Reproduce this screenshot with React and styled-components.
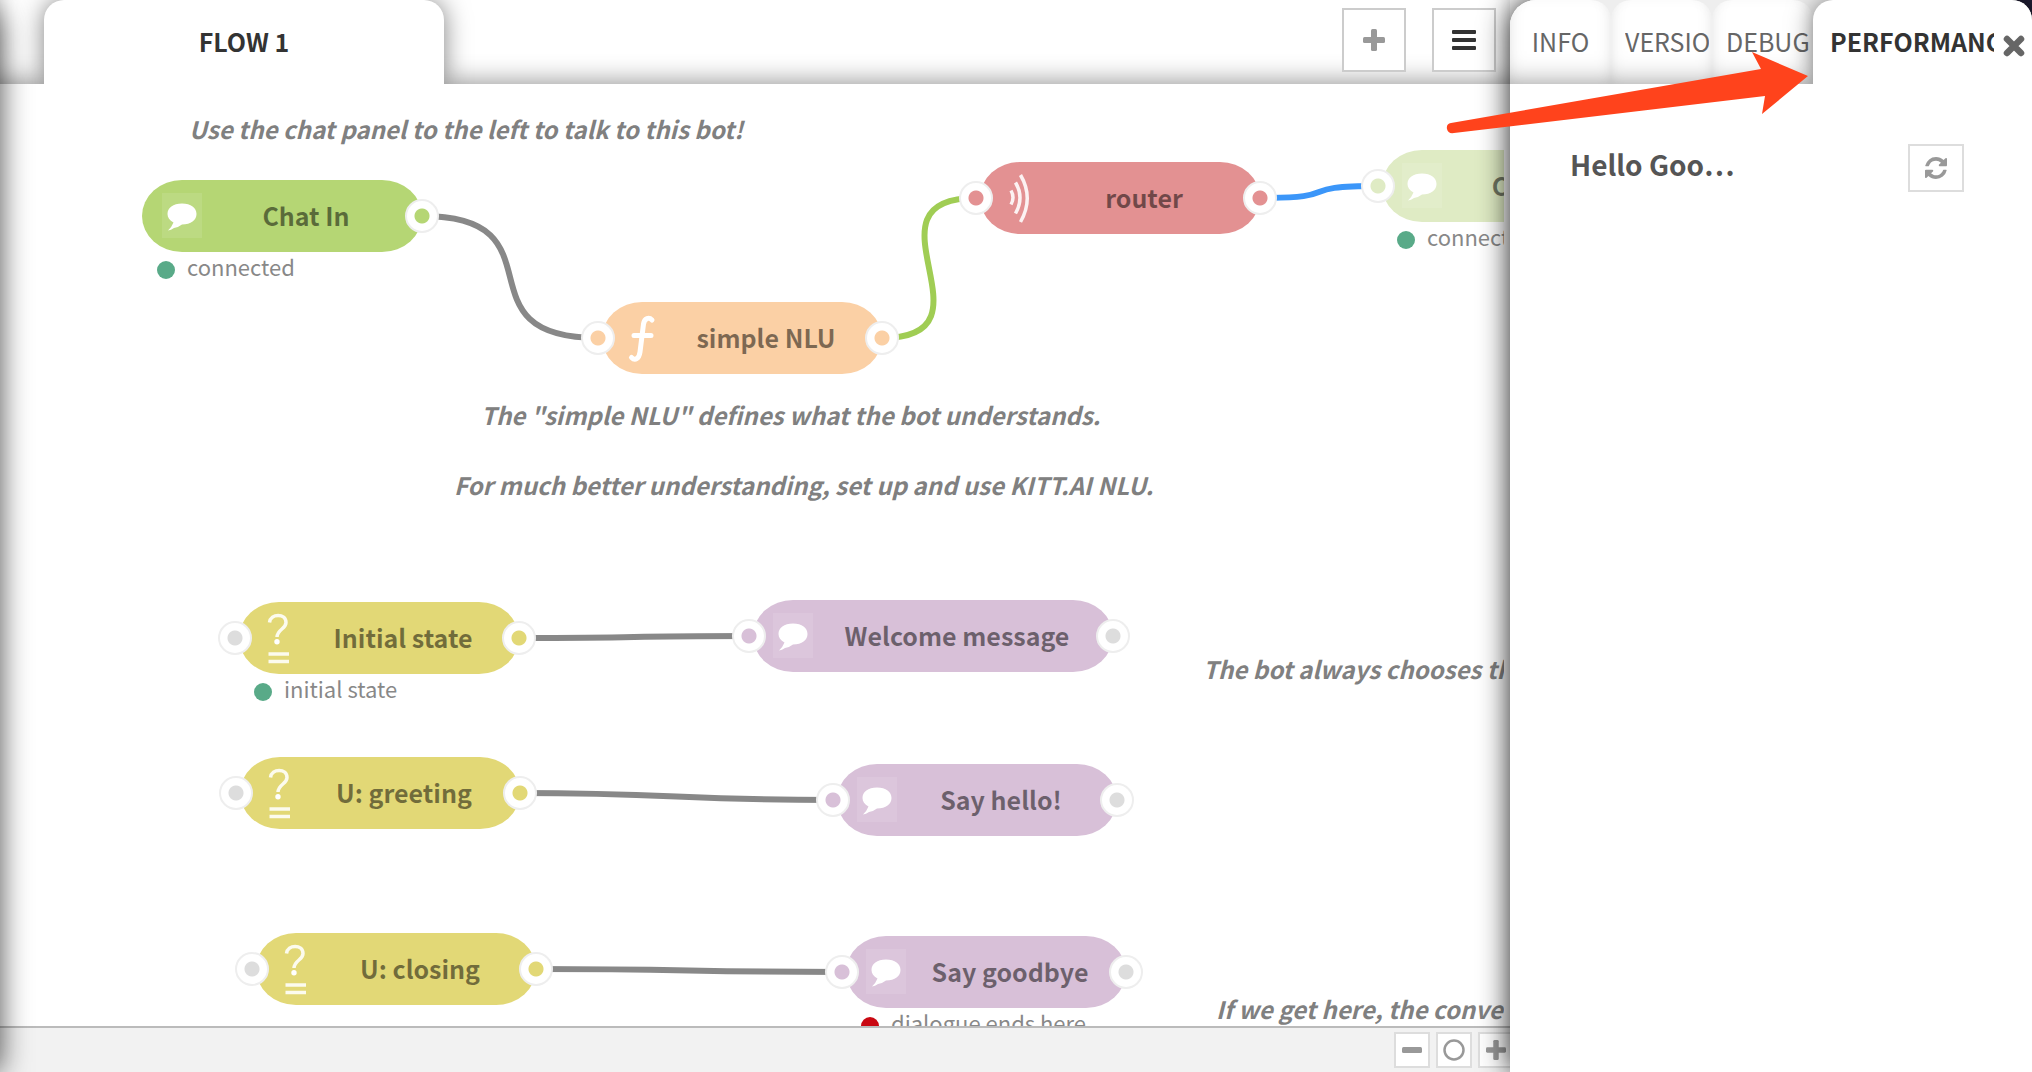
import React from 'react';
import styled, { createGlobalStyle } from 'styled-components';

const GlobalStyle = createGlobalStyle`
  *, *::before, *::after { box-sizing: border-box; }
  body {
    margin: 0;
    overflow: hidden;
    background: #fff;
    font-family: 'Noto Sans CJK SC', 'Open Sans', sans-serif;
    font-size: 25px;
    line-height: 36px;
    color: #333;
  }
  button { font: inherit; color: inherit; margin: 0; padding: 0; cursor: pointer; }
  p, h2 { margin: 0; }
`;

const Shell = styled.div`
  position: relative;
  display: flex;
  height: 100vh;
  overflow: hidden;
  background: linear-gradient(to left, #23213a 60px, #fff 60px);
`;

const Workspace = styled.main`
  flex: 1;
  min-width: 0;
  display: flex;
  flex-direction: column;
  background: #fff;
`;

const ChatDrawerEdge = styled.div`
  position: absolute;
  z-index: 2;
  top: 0;
  bottom: 0;
  left: -60px;
  width: 60px;
  border-radius: 30px 30px 0 0;
  box-shadow: 0 0 30px rgba(0, 0, 0, 0.7);
  pointer-events: none;
`;

const Header = styled.header`
  display: flex;
  align-items: flex-start;
  flex: none;
  height: 84px;
  padding: 0 14px 0 44px;
  overflow: hidden;
  box-shadow: inset 0 -16px 26px -14px rgba(0, 0, 0, 0.42);
`;

const FlowTab = styled.button`
  width: 400px;
  height: 84px;
  padding-bottom: 2px;
  border: 0;
  border-radius: 20px 20px 0 0;
  background: #fff;
  font-weight: 700;
  box-shadow: 0 0 26px rgba(0, 0, 0, 0.5);
`;

const HeaderActions = styled.div`
  display: flex;
  gap: 26px;
  margin: 8px 0 0 auto;
`;

const IconButton = styled.button`
  display: flex;
  align-items: center;
  justify-content: center;
  flex: none;
  width: ${(p) => p.$w}px;
  height: ${(p) => p.$h}px;
  border: 2px solid ${(p) => p.$line || '#ddd'};
  background: #fff;
`;

const Canvas = styled.section`
  position: relative;
  flex: 1;
  min-height: 0;
  margin-right: 6px;
  overflow: hidden;
`;

const Wires = styled.svg`
  position: absolute;
  top: 0;
  left: 0;
  width: 100%;
  height: 100%;
  fill: none;
  stroke-width: 6px;
`;

const Note = styled.p`
  position: absolute;
  left: ${(p) => p.$x}px;
  top: ${(p) => p.$y}px;
  font-size: 24px;
  font-weight: 700;
  font-style: italic;
  color: #808080;
  white-space: nowrap;
`;

const NodeBox = styled.div`
  position: absolute;
  left: ${(p) => p.$x}px;
  top: ${(p) => p.$y}px;
  width: ${(p) => p.$w}px;
  height: 72px;
  display: flex;
  align-items: center;
  justify-content: center;
  padding: 0 0 2px 48px;
  border-radius: 40px / 36px;
  background: ${(p) => p.$color};
  font-weight: 700;
  white-space: nowrap;
`;

const NodeName = styled.span`
  color: rgba(0, 0, 0, 0.5);
`;

const NodeIcon = styled.svg`
  position: absolute;
  left: 20px;
  top: 0;
  width: 40px;
  height: 72px;
  fill: none;
  stroke: #fff;
  stroke-opacity: 0.88;
  stroke-width: 4px;
`;

const Port = styled.span`
  position: absolute;
  top: 19px;
  ${(p) => (p.$side === 'in' ? 'left: -21px;' : 'right: -17px;')}
  width: 34px;
  height: 34px;
  border: 2px solid #eee;
  border-radius: 50%;
  background: radial-gradient(circle, ${(p) => p.$dot} 0 7px, #fff 8px);
`;

const Status = styled.div`
  position: absolute;
  left: 15px;
  top: 72px;
  display: flex;
  align-items: center;
  gap: 12px;
  font-size: 22px;
  line-height: 28px;
  font-weight: 400;
  color: #888;

  &::before {
    content: '';
    width: 18px;
    height: 18px;
    margin-top: 8px;
    border-radius: 50%;
    background: ${(p) => p.$color};
  }
`;

const Footer = styled.footer`
  display: flex;
  align-items: center;
  justify-content: flex-end;
  flex: none;
  gap: 6px;
  height: 46px;
  border-top: 2px solid #bbb;
  background: #f2f2f2;
  margin-right: -4px;
`;

const SidePanel = styled.aside`
  position: relative;
  z-index: 1;
  flex: none;
  display: flex;
  flex-direction: column;
  width: 522px;
  border-radius: 26px 20px 0 0;
  background: #fff;
  box-shadow: 0 0 30px rgba(0, 0, 0, 0.9);
`;

const PanelTabs = styled.div`
  display: flex;
  height: 84px;
  overflow: hidden;
  border-radius: 26px 20px 0 0;
  background: #eee;
`;

const PanelTab = styled.button`
  position: relative;
  z-index: ${(p) => (p.$active ? 1 : 0)};
  flex: ${(p) => (p.$active ? '1' : 'none')};
  min-width: 0;
  width: ${(p) => (p.$active ? 'auto' : '101px')};
  height: 84px;
  padding: ${(p) => (p.$active ? '0 38px 2px 17px' : p.$center ? '0 0 2px' : '0 3px 2px 14px')};
  border: 0;
  border-radius: 20px 20px 0 0;
  background: #fff;
  color: ${(p) => (p.$active ? '#333' : '#666')};
  font-weight: ${(p) => (p.$active ? 700 : 400)};
  text-align: ${(p) => (p.$center ? 'center' : 'left')};
  box-shadow: ${(p) =>
    p.$active
      ? '0 0 26px rgba(0, 0, 0, 0.5)'
      : 'inset 0 -16px 26px -14px rgba(0, 0, 0, 0.36), inset 0 0 12px rgba(0, 0, 0, 0.03)'};

  span {
    display: block;
    overflow: hidden;
    white-space: nowrap;
  }
`;

const CloseButton = styled.button`
  position: absolute;
  z-index: 2;
  top: 34px;
  right: 6px;
  display: flex;
  border: 0;
  background: none;
`;

const PanelBody = styled.div`
  display: flex;
  align-items: flex-start;
  justify-content: space-between;
  padding: 60px 68px 0 60px;
`;

const PanelTitle = styled.h2`
  font-size: 28px;
  line-height: 40px;
  font-weight: 700;
  color: #555;
`;

const Pointer = styled.svg`
  position: absolute;
  z-index: 3;
  top: 52px;
  right: 222px;
  width: 366px;
  height: 84px;
  pointer-events: none;
`;

const PlusIcon = ({ size = 22, color = '#999' }) => (
  <svg width={size} height={size} viewBox="0 0 22 22" fill={color} aria-hidden="true">
    <rect x="8" y="0" width="6" height="22" rx="1.5" />
    <rect x="0" y="8" width="22" height="6" rx="1.5" />
  </svg>
);

const MenuIcon = () => (
  <svg width="24" height="20" viewBox="0 0 24 20" fill="#333" aria-hidden="true">
    <rect width="24" height="4" rx="1" />
    <rect y="8" width="24" height="4" rx="1" />
    <rect y="16" width="24" height="4" rx="1" />
  </svg>
);

const RefreshIcon = () => (
  <svg width="22" height="22" viewBox="0 0 1536 1536" fill="#999" aria-hidden="true">
    <path d="M1511 928q0 5-1 7-64 268-268 434.500T764 1536q-146 0-282.500-55T238 1324l-129 129q-19 19-45 19t-45-19-19-45V960q0-26 19-45t45-19h448q26 0 45 19t19 45-19 45l-137 137q71 66 161 102t187 36q134 0 250-65t186-179q11-17 53-117 8-23 30-23h192q13 0 22.500 9.500t9.500 22.500zM1536 128v448q0 26-19 45t-45 19h-448q-26 0-45-19t-19-45 19-45l138-138Q969 256 768 256q-134 0-250 65T332 500q-11 17-53 117-8 23-30 23H50q-13 0-22.500-9.500T18 608v-7q65-268 270-434.500T768 0q146 0 284 55.500T1297 212l130-129q19-19 45-19t45 19 19 45z" />
  </svg>
);

const glyphs = {
  chat: (
    <>
      <rect x="0" y="13" width="40" height="45" fill="#fff" fillOpacity="0.1" stroke="none" />
      <path
        d="M20 23.500C29 23.500 34.500 28 34.500 34C34.500 40 29 44.500 20 44.500Q17 47 12 48Q9 50 6 50.500Q9.500 47.500 11.500 42.500C7.500 40.500 5.500 37.500 5.500 34C5.500 28 11 23.500 20 23.500Z"
        fill="#fff"
        stroke="none"
      />
    </>
  ),
  fn: (
    <path
      d="M30 18C27 15 22.500 16 21.500 22L18 50C17 57 13 59 9.500 55.500M12 33.500H29"
      strokeWidth="5"
      strokeLinecap="round"
      strokeOpacity="1"
    />
  ),
  signal: <path d="M11 28.500Q15 35.500 11 42.500M15.500 20.500Q24.500 35.500 15.500 51.500M20.500 13Q34 36 20.500 60" strokeWidth="3.500" />,
  question: (
    <>
      <path d="M10.500 20.500C11.500 11 27 11 27 20.500C27 27 18.500 27 18 35" strokeWidth="3.500" />
      <circle cx="18" cy="39.700" r="2.700" fill="#fff" stroke="none" />
      <path d="M9.500 52H30M9.500 59.500H30" strokeWidth="3.500" />
    </>
  ),
};

const GREEN = '#59aa88';
const OLIVE = '#e2d876';
const LILAC = '#d8c0d8';

const nodes = [
  { name: 'Chat In', icon: 'chat', x: 142, y: 96, color: '#b5d674', output: true, status: ['connected', GREEN] },
  { name: 'simple NLU', icon: 'fn', x: 602, y: 218, color: '#fbd0a5', input: true, output: true },
  { name: 'router', icon: 'signal', x: 980, y: 78, color: '#e39192', input: true, output: true },
  { name: 'Chat Out', icon: 'chat', x: 1382, y: 66, color: '#dfebc4', input: true, status: ['connected', GREEN] },
  { name: 'Initial state', icon: 'question', x: 239, y: 518, color: OLIVE, input: 'free', output: true, status: ['initial state', GREEN] },
  { name: 'Welcome message', icon: 'chat', x: 753, y: 516, w: 360, color: LILAC, input: true, output: 'free' },
  { name: 'U: greeting', icon: 'question', x: 240, y: 673, color: OLIVE, input: 'free', output: true },
  { name: 'Say hello!', icon: 'chat', x: 837, y: 680, color: LILAC, input: true, output: 'free' },
  { name: 'U: closing', icon: 'question', x: 256, y: 849, color: OLIVE, input: 'free', output: true },
  { name: 'Say goodbye', icon: 'chat', x: 846, y: 852, color: LILAC, input: true, output: 'free', status: ['dialogue ends here', '#c90812'] },
];

const wires = [
  { from: [422, 132], to: [598, 254], reach: 145 },
  { from: [882, 254], to: [976, 114], reach: 122, color: '#a0cd54' },
  { from: [1260, 114], to: [1378, 102], reach: 89, color: '#3b96f9' },
  { from: [519, 554], to: [749, 552], reach: 150 },
  { from: [520, 709], to: [833, 716], reach: 150 },
  { from: [536, 885], to: [842, 888], reach: 150 },
];

const notes = [
  { x: 189, y: 27, text: 'Use the chat panel to the left to talk to this bot!' },
  { x: 481, y: 313, text: 'The "simple NLU" defines what the bot understands.' },
  { x: 454, y: 383, text: 'For much better understanding, set up and use KITT.AI NLU.' },
  { x: 1203, y: 567, text: 'The bot always chooses the' },
  { x: 1216, y: 907, text: 'If we get here, the conversation' },
];

const portColor = (state, color) => (state === 'free' ? '#ddd' : color);

function FlowNode({ name, icon, x, y, w = 280, color, input, output, status }) {
  return (
    <NodeBox $x={x} $y={y} $w={w} $color={color}>
      <NodeIcon viewBox="0 0 40 72" aria-hidden="true">{glyphs[icon]}</NodeIcon>
      <NodeName>{name}</NodeName>
      {input && <Port $side="in" $dot={portColor(input, color)} />}
      {output && <Port $side="out" $dot={portColor(output, color)} />}
      {status && <Status $color={status[1]}>{status[0]}</Status>}
    </NodeBox>
  );
}

export default function App() {
  return (
    <>
      <GlobalStyle />
      <Shell>
        <ChatDrawerEdge />
        <Workspace>
          <Header>
            <FlowTab>FLOW 1</FlowTab>
            <HeaderActions>
              <IconButton $w={64} $h={64} $line="#ccc" aria-label="Add flow"><PlusIcon /></IconButton>
              <IconButton $w={64} $h={64} $line="#ccc" aria-label="List flows"><MenuIcon /></IconButton>
            </HeaderActions>
          </Header>
          <Canvas>
            <Wires aria-hidden="true">
              {wires.map(({ from, to, reach, color = '#888' }) => (
                <path
                  key={from.join()}
                  stroke={color}
                  d={`M${from} C${from[0] + reach},${from[1]} ${to[0] - reach},${to[1]} ${to}`}
                />
              ))}
            </Wires>
            {notes.map((n) => <Note key={n.text} $x={n.x} $y={n.y}>{n.text}</Note>)}
            {nodes.map((n) => <FlowNode key={n.name} {...n} />)}
          </Canvas>
          <Footer>
            <IconButton $w={36} $h={36} aria-label="Zoom out">
              <svg width="20" height="20" aria-hidden="true"><rect y="7" width="20" height="6" rx="1.500" fill="#999" /></svg>
            </IconButton>
            <IconButton $w={36} $h={36} aria-label="Reset zoom">
              <svg width="22" height="22" aria-hidden="true"><circle cx="11" cy="11" r="9.500" fill="none" stroke="#999" strokeWidth="2.500" /></svg>
            </IconButton>
            <IconButton $w={36} $h={36} aria-label="Zoom in"><PlusIcon size={20} /></IconButton>
          </Footer>
        </Workspace>
        <SidePanel>
          <PanelTabs>
            <PanelTab $center><span>INFO</span></PanelTab>
            <PanelTab><span>VERSIONS</span></PanelTab>
            <PanelTab><span>DEBUG</span></PanelTab>
            <PanelTab $active><span>PERFORMANCE</span></PanelTab>
          </PanelTabs>
          <CloseButton aria-label="Close panel">
            <svg width="24" height="24" viewBox="0 0 24 24" stroke="#666" strokeWidth="6.500" strokeLinecap="round" aria-hidden="true">
              <path d="M5 5L19 19M19 5L5 19" />
            </svg>
          </CloseButton>
          <PanelBody>
            <PanelTitle>Hello Goo…</PanelTitle>
            <IconButton $w={56} $h={48} aria-label="Refresh"><RefreshIcon /></IconButton>
          </PanelBody>
        </SidePanel>
        <Pointer viewBox="0 0 366 84" aria-hidden="true">
          <path d="M7 71L317 17L308 0L364 24L318 62L321 44L10 81Q4 82 3 77Q2 72 7 71Z" fill="#ff431c" />
        </Pointer>
      </Shell>
    </>
  );
}
